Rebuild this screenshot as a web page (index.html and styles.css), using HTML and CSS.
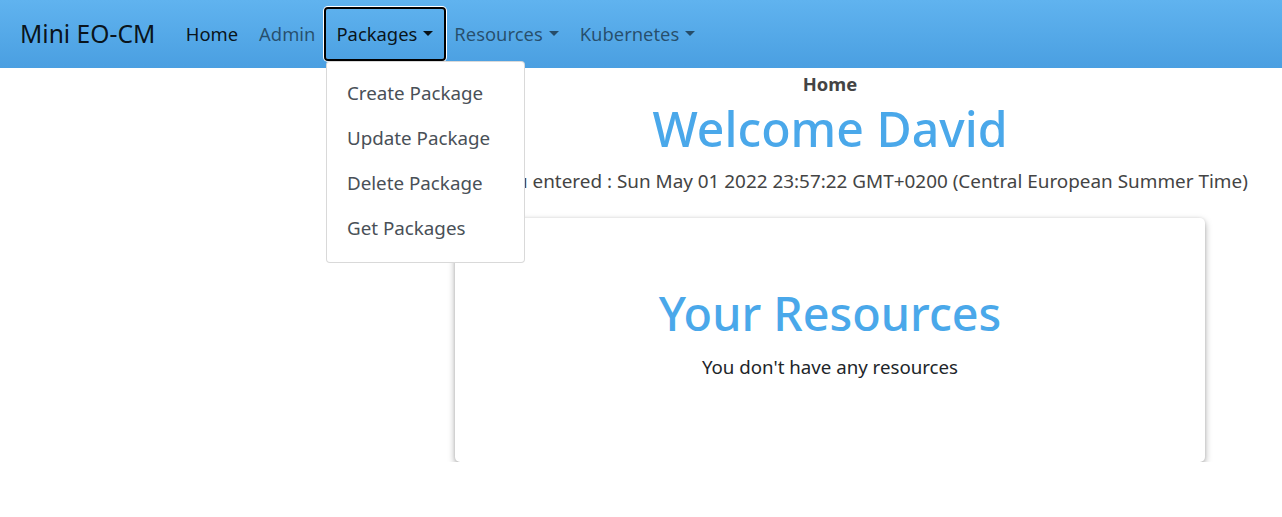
FILE: index.html
```html
<!DOCTYPE html>
<html lang="en">
<head>
<meta charset="utf-8">
<title>Mini EO-CM</title>
<link rel="stylesheet" href="styles.css">
</head>
<body>
<nav class="navbar">
  <span class="brand">Mini EO-CM</span>
  <ul class="nav">
    <li class="nav-item"><a class="nav-link active">Home</a></li>
    <li class="nav-item"><a class="nav-link">Admin</a></li>
    <li class="nav-item dropdown">
      <a class="nav-link active focused">Packages<span class="caret"></span></a>
      <div class="dropdown-menu">
        <a class="dropdown-item">Create Package</a>
        <a class="dropdown-item">Update Package</a>
        <a class="dropdown-item">Delete Package</a>
        <a class="dropdown-item">Get Packages</a>
      </div>
    </li>
    <li class="nav-item"><a class="nav-link">Resources<span class="caret"></span></a></li>
    <li class="nav-item"><a class="nav-link">Kubernetes<span class="caret"></span></a></li>
  </ul>
</nav>
<div class="layout">
  <aside class="side"></aside>
  <main class="main">
    <div class="page-title">Home</div>
    <h1 class="welcome">Welcome David</h1>
    <p class="date">The time you entered : Sun May 01 2022 23:57:22 GMT+0200 (Central European Summer Time)</p>
    <section class="card">
      <h2 class="card-title">Your Resources</h2>
      <p class="card-text">You don't have any resources</p>
    </section>
  </main>
</div>
</body>
</html>
```

FILE: styles.css
```css
* { box-sizing: border-box; }
html, body { margin: 0; padding: 0; }
body {
  font-family: "Noto Sans", "Open Sans", sans-serif;
  font-size: 18.4px;
  line-height: 1.5;
  color: #212529;
  background: #fff;
}
.navbar {
  height: 68px;
  display: flex;
  align-items: center;
  padding: 0 20px;
  background: linear-gradient(to bottom, #60b3ef, #4a9fe1);
}
.brand {
  font-size: 24.6px;
  color: rgba(0,0,0,.9);
  margin-right: 20px;
  line-height: 1.5;
}
.nav {
  list-style: none;
  margin: 0;
  padding: 0;
  display: flex;
  align-items: center;
}
.nav-item { position: relative; }
.nav-link {
  display: flex;
  align-items: center;
  padding: 11.2px 10.5px;
  color: rgba(0,0,0,.55);
  border-radius: 2px;
  cursor: pointer;
}
.nav-link.active { color: rgba(0,0,0,.9); }
.nav-link.focused {
  outline: 2px solid #000;
  box-shadow: 0 0 0 3px #fff;
}
.caret {
  display: inline-block;
  margin-left: 6px;
  width: 0;
  height: 0;
  border-top: 5.5px solid currentColor;
  border-left: 5.5px solid transparent;
  border-right: 5.5px solid transparent;
}
.dropdown-menu {
  position: absolute;
  left: 0;
  top: calc(100% + 2px);
  width: 199px;
  background: #fff;
  border: 1px solid rgba(0,0,0,.15);
  border-radius: 4px;
  padding: 9px 0 11px;
  z-index: 10;
}
.dropdown-item {
  display: block;
  padding: 8.7px 20px;
  font-size: 18.8px;
  line-height: 27.6px;
  color: #495057;
  white-space: nowrap;
}
.layout {
  display: grid;
  grid-template-columns: 378px 1fr;
}
.main {
  text-align: center;
  padding-top: 2px;
}
.page-title {
  font-weight: bold;
  color: #444;
}
.welcome {
  margin: 2px 0 0;
  font-size: 48.2px;
  font-weight: 500;
  line-height: 1.2;
  color: #4aa8ea;
}
.date {
  margin: 11px 0 22px;
  font-size: 18.9px;
  line-height: 27.6px;
  color: #444;
  white-space: nowrap;
}
.card {
  width: 750px;
  margin: 0 auto;
  padding: 67px 20px 81px;
  background: #fff;
  border-radius: 5px;
  box-shadow: 0 3px 7px rgba(0,0,0,.35), 0 0 3px rgba(0,0,0,.08);
}
.card-title {
  margin: 0 0 12px;
  font-size: 46.7px;
  font-weight: 500;
  line-height: 1.2;
  color: #4aa8ea;
}
.card-text { margin: 0; color: #212529; font-size: 18.7px; }
```
